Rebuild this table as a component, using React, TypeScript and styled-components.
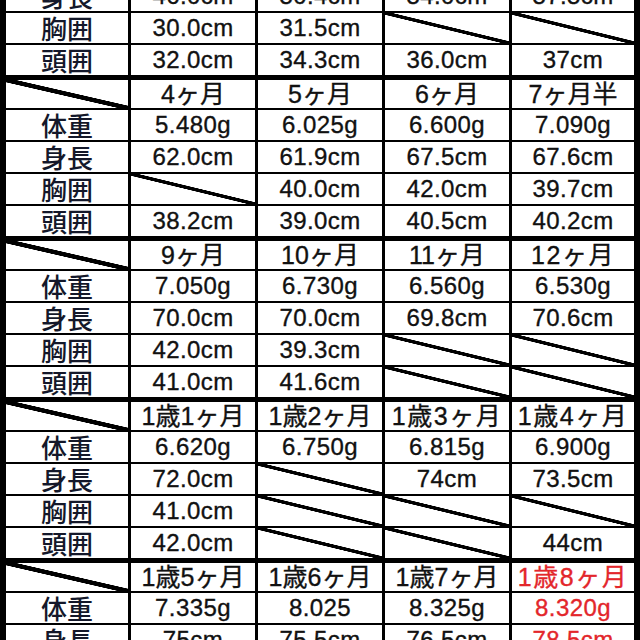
import React from "react";
import styled, { createGlobalStyle, css } from "styled-components";

const Global = createGlobalStyle`
  html, body { margin: 0; padding: 0; background: #000; }
  body { font-family: "Liberation Sans", "Noto Sans CJK JP", sans-serif; }
`;

const Viewport = styled.div`
  width: 640px;
  height: 640px;
  overflow: hidden;
  background: #000;
`;

const Table = styled.div`
  display: flex;
  flex-direction: column;
  gap: 5px;
  margin-top: -81px;
`;

const Group = styled.div`
  display: grid;
  grid-template-columns: 122px 124px 124px 124px 122px;
  grid-template-rows: 28px repeat(4, 30px);
  column-gap: 3px;
  row-gap: 2px;
  padding: 0 6px;
  background: #000;
`;

const diagonal = (w: number) => css`
  background: linear-gradient(
    to top right,
    #fff calc(50% - ${w / 2 + 0.5}px),
    #000 calc(50% - ${w / 2}px),
    #000 calc(50% + ${w / 2}px),
    #fff calc(50% + ${w / 2 + 0.5}px)
  );
`;

const Cell = styled.div<{ $empty?: boolean; $red?: boolean }>`
  background: #fff;
  display: flex;
  align-items: center;
  justify-content: center;
  font-family: "Liberation Sans", "Noto Sans CJK JP", sans-serif;
  font-size: 24px;
  letter-spacing: 0.4px;
  line-height: 1;
  color: ${(p) => (p.$red ? "#e3262b" : "#111")};
  -webkit-text-stroke: 0.35px ${(p) => (p.$red ? "#e3262b" : "#111")};
  white-space: nowrap;
  overflow: hidden;
  ${(p) => p.$empty && diagonal(3)}
`;

const Corner = styled.div`
  ${diagonal(4)}
`;

const Label = styled.div`
  background: #fff;
  display: flex;
  align-items: center;
  justify-content: center;
  font-family: "Noto Sans CJK JP", sans-serif;
  font-size: 26px;
  font-weight: 500;
  line-height: 1;
  color: #14182a;
`;

const HeadCell = styled(Cell)<{ $wide?: boolean }>`
  font-size: 25px;
  letter-spacing: ${(p) => (p.$wide ? "1.5px" : "0")};
`;

type Val = string | null;
interface GroupData {
  head: string[];
  wide?: boolean[];
  redLast?: boolean;
  rows: Val[][];
}

const labels = ["体重", "身長", "胸囲", "頭囲"];

const groups: GroupData[] = [
  {
    head: ["出生時", "1ヶ月", "2ヶ月", "3ヶ月"],
    rows: [
      ["2.950g", "3.850g", "4.600g", "5.100g"],
      ["46.0cm", "50.4cm", "54.0cm", "57.5cm"],
      ["30.0cm", "31.5cm", null, null],
      ["32.0cm", "34.3cm", "36.0cm", "37cm"],
    ],
  },
  {
    head: ["4ヶ月", "5ヶ月", "6ヶ月", "7ヶ月半"],
    rows: [
      ["5.480g", "6.025g", "6.600g", "7.090g"],
      ["62.0cm", "61.9cm", "67.5cm", "67.6cm"],
      [null, "40.0cm", "42.0cm", "39.7cm"],
      ["38.2cm", "39.0cm", "40.5cm", "40.2cm"],
    ],
  },
  {
    head: ["9ヶ月", "10ヶ月", "11ヶ月", "12ヶ月"],
    wide: [false, false, false, true],
    rows: [
      ["7.050g", "6.730g", "6.560g", "6.530g"],
      ["70.0cm", "70.0cm", "69.8cm", "70.6cm"],
      ["42.0cm", "39.3cm", null, null],
      ["41.0cm", "41.6cm", null, null],
    ],
  },
  {
    head: ["1歳1ヶ月", "1歳2ヶ月", "1歳3ヶ月", "1歳4ヶ月"],
    wide: [false, false, true, true],
    rows: [
      ["6.620g", "6.750g", "6.815g", "6.900g"],
      ["72.0cm", null, "74cm", "73.5cm"],
      ["41.0cm", null, null, null],
      ["42.0cm", null, null, "44cm"],
    ],
  },
  {
    head: ["1歳5ヶ月", "1歳6ヶ月", "1歳7ヶ月", "1歳8ヶ月"],
    wide: [false, false, false, true],
    redLast: true,
    rows: [
      ["7.335g", "8.025", "8.325g", "8.320g"],
      ["75cm", "75.5cm", "76.5cm", "78.5cm"],
      ["47.0cm", null, null, null],
      ["45.0cm", null, null, null],
    ],
  },
];

export default function App() {
  return (
    <Viewport>
      <Global />
      <Table>
        {groups.map((g, gi) => (
          <Group key={gi}>
            <Corner />
            {g.head.map((h, i) => (
              <HeadCell key={i} $red={g.redLast && i === 3} $wide={g.wide?.[i]}>
                {h}
              </HeadCell>
            ))}
            {g.rows.map((r, ri) => (
              <React.Fragment key={ri}>
                <Label>{labels[ri]}</Label>
                {r.map((v, ci) => (
                  <Cell key={ci} $empty={v === null} $red={g.redLast && ci === 3}>
                    {v}
                  </Cell>
                ))}
              </React.Fragment>
            ))}
          </Group>
        ))}
      </Table>
    </Viewport>
  );
}
